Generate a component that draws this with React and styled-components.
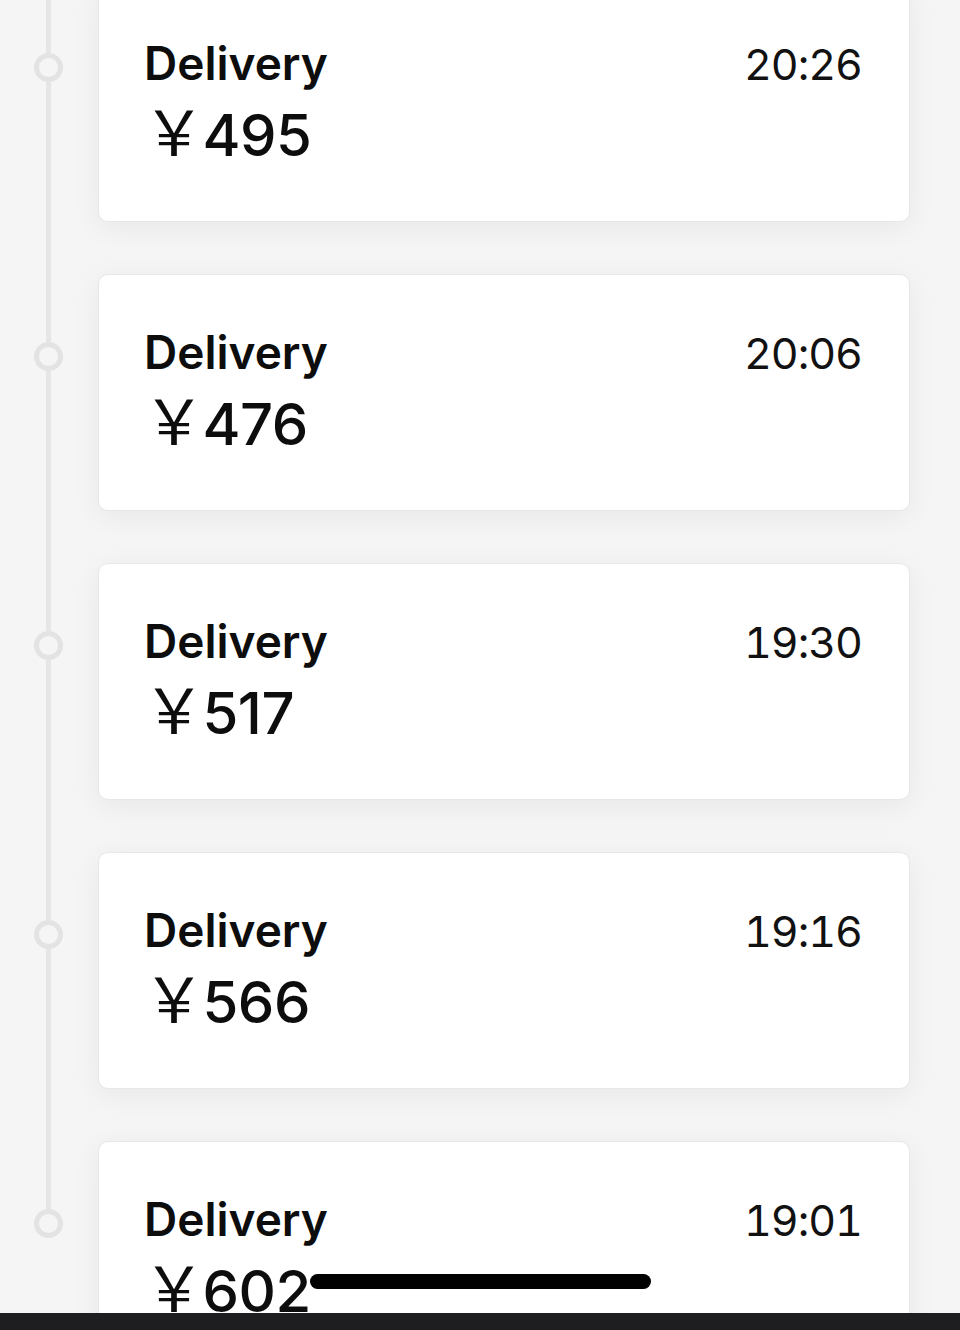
import React from "react";
import styled, { createGlobalStyle } from "styled-components";

const Global = createGlobalStyle`
  html, body { margin: 0; padding: 0; background: #f5f5f5; }
  body { font-family: Inter, "Noto Sans", "Noto Sans CJK SC", sans-serif; }
`;

const Screen = styled.div`
  width: 960px;
  height: 1330px;
  display: flex;
  flex-direction: column;
  overflow: hidden;
  position: relative;
  background: #f5f5f5;
`;

const Scroll = styled.div`
  flex: 1;
  overflow: hidden;
`;

const List = styled.div`
  margin-top: -15px;
  display: flex;
  flex-direction: column;
`;

const Row = styled.div`
  display: grid;
  grid-template-columns: 98px 812px;
`;

const Rail = styled.div`
  display: flex;
  flex-direction: column;
  align-items: center;
  width: 96px;
`;

const Segment = styled.div`
  width: 5px;
  background: ${(p) => (p.$hidden ? "transparent" : "#e6e6e6")};
  height: ${(p) => (p.$grow ? "auto" : `${p.$h}px`)};
  flex: ${(p) => (p.$grow ? "1" : "none")};
`;

const Dot = styled.div`
  width: 29px;
  height: 29px;
  box-sizing: border-box;
  border-radius: 50%;
  border: 5px solid #e3e3e3;
  background: #f5f5f5;
  flex: none;
`;

const CardSlot = styled.div`
  padding-bottom: 52px;
`;

const Card = styled.div`
  box-sizing: border-box;
  height: 237px;
  background: #fff;
  border: 1.5px solid #e7e7e7;
  border-radius: 10px;
  box-shadow: 0 6px 28px rgba(0, 0, 0, 0.06);
  padding: 50px 47px 0 45px;
  display: flex;
  flex-direction: column;
`;

const TopLine = styled.div`
  display: flex;
  justify-content: space-between;
  align-items: baseline;
`;

const Title = styled.div`
  font-family: Inter, "Noto Sans", sans-serif;
  font-weight: 600;
  font-size: 46px;
  line-height: 55px;
  color: #0d0d0d;
  letter-spacing: 0;
`;

const Time = styled.div`
  font-family: Inter, "Noto Sans", sans-serif;
  font-weight: 400;
  font-size: 43px;
  line-height: 55px;
  color: #111;
  letter-spacing: -1px;
  font-feature-settings: "tnum" 1;
`;

const Amount = styled.div`
  margin-top: 2px;
  font-family: Inter, "Noto Sans CJK SC", sans-serif;
  font-weight: 500;
  font-size: 58px;
  line-height: 70px;
  color: #0d0d0d;
  display: flex;
  align-items: baseline;
  letter-spacing: -0.5px;
`;

const Yen = styled.span`
  font-family: "Noto Sans CJK SC", sans-serif;
  font-weight: 400;
  font-size: 62px;
  margin-left: -1px;
  margin-right: -2px;
`;

const BottomBar = styled.div`
  height: 17px;
  flex: none;
  background: #1e1e20;
`;

const HomeIndicator = styled.div`
  position: absolute;
  left: 310px;
  top: 1274px;
  width: 341px;
  height: 15px;
  border-radius: 8px;
  background: #000;
`;

const items = [
  { time: "20:26", amount: "495" },
  { time: "20:06", amount: "476" },
  { time: "19:30", amount: "517" },
  { time: "19:16", amount: "566" },
  { time: "19:01", amount: "602" },
];

export default function App() {
  return (
    <>
      <Global />
      <Screen>
        <Scroll>
          <List>
            {items.map((it, i) => (
              <Row key={it.time}>
                <Rail>
                  <Segment $h={68} />
                  <Dot />
                  <Segment $grow $hidden={i === items.length - 1} />
                </Rail>
                <CardSlot>
                  <Card>
                    <TopLine>
                      <Title>Delivery</Title>
                      <Time>{it.time}</Time>
                    </TopLine>
                    <Amount>
                      <Yen>￥</Yen>
                      {it.amount}
                    </Amount>
                  </Card>
                </CardSlot>
              </Row>
            ))}
          </List>
        </Scroll>
        <BottomBar />
        <HomeIndicator />
      </Screen>
    </>
  );
}
